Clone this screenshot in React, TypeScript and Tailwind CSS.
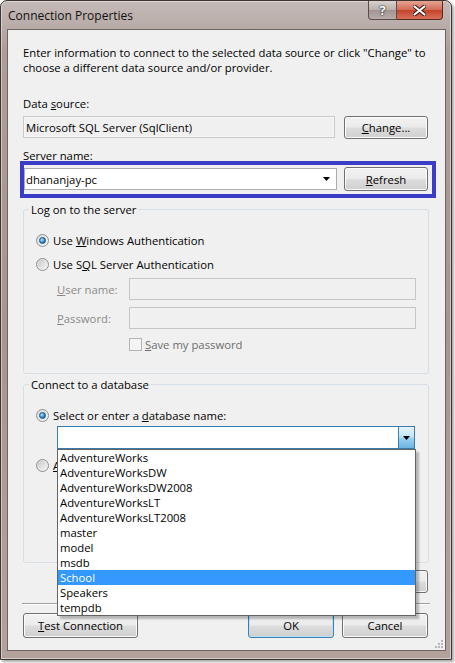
import React from "react";

const BTN =
  "flex items-center justify-center rounded-[3px] border bg-[linear-gradient(#f2f2f2_0%,#ebebeb_48%,#dddddd_52%,#cfcfcf_100%)] text-black";

function Button({
  children,
  className = "",
  primary = false,
}: {
  children: React.ReactNode;
  className?: string;
  primary?: boolean;
}) {
  return (
    <button
      type="button"
      className={`${BTN} ${
        primary
          ? "border-[#3c7fb1] shadow-[inset_0_0_0_1px_#b8e2f8]"
          : "border-[#707070] shadow-[inset_0_0_0_1px_#fbfbfb]"
      } ${className}`}
    >
      {children}
    </button>
  );
}

function Radio({ checked = false }: { checked?: boolean }) {
  return (
    <span className="flex h-[13px] w-[13px] shrink-0 items-center justify-center rounded-full border border-[#8e8f8f] bg-[linear-gradient(135deg,#d9d9d9,#f8f8f8)]">
      <span
        className={
          checked
            ? "h-[7px] w-[7px] rounded-full border border-[#1c5180] bg-[radial-gradient(circle_at_35%_35%,#b4ecff,#2a8bd8_55%,#0d4a91)]"
            : "h-[9px] w-[9px] rounded-full bg-[linear-gradient(135deg,#cbcbcb,#f4f4f4)]"
        }
      />
    </span>
  );
}

function Arrow() {
  return (
    <svg width="7" height="4" viewBox="0 0 7 4">
      <path d="M0 0h7L3.5 4z" fill="#000" />
    </svg>
  );
}

const DATABASES = [
  "AdventureWorks",
  "AdventureWorksDW",
  "AdventureWorksDW2008",
  "AdventureWorksLT",
  "AdventureWorksLT2008",
  "master",
  "model",
  "msdb",
  "School",
  "Speakers",
  "tempdb",
];

export default function App() {
  return (
    <div className="h-[663px] w-[455px] bg-white font-['Open_Sans','Noto_Sans',sans-serif] text-[11.3px] leading-[15px] text-black">
      <div className="relative h-[660px] w-[452px] rounded-t-[7px] border border-[#3e3432] bg-[linear-gradient(180deg,#c4bab7_0%,#ad9d98_8%,#a8958f_50%,#b3a29c_100%)] shadow-[2px_2px_3px_rgba(0,0,0,0.35),inset_0_0_0_1px_rgba(255,255,255,0.45)]">
        {/* title bar */}
        <div className="flex h-[28px] items-center">
          <span className="pl-[7px] pt-[1px] text-[12px] text-[#111]">Connection Properties</span>
          <div className="ml-auto mr-[8px] flex self-start">
            <div className="flex h-[19px] w-[29px] items-center justify-center rounded-bl-[4px] border border-t-0 border-[#5a4c49] bg-[linear-gradient(#d8d2d0_0%,#b9aeab_50%,#a29592_51%,#b7aca9_100%)] text-[13px] font-bold leading-none text-white [text-shadow:0_0_2px_#222,0_0_1px_#000]">
              ?
            </div>
            <div className="flex h-[19px] w-[46px] items-center justify-center rounded-br-[4px] border border-l-0 border-t-0 border-[#5a2a22] bg-[linear-gradient(#e6a493_0%,#d26a55_50%,#c4432b_51%,#d9705a_100%)]">
              <svg width="13" height="11" viewBox="0 0 13 11">
                <path
                  d="M1 1l11 9M12 1L1 10"
                  stroke="#3a1510"
                  strokeWidth="4"
                  strokeLinecap="round"
                />
                <path
                  d="M1.5 1.5l10 8M11.5 1.5l-10 8"
                  stroke="#fff"
                  strokeWidth="2.2"
                  strokeLinecap="round"
                />
              </svg>
            </div>
          </div>
        </div>

        {/* client area */}
        <div className="relative ml-[6px] h-[622px] w-[439px] border border-[#6f6462] bg-[#f0f0f0] pl-[15px] pr-[17px]">
          <p className="mt-[15px]">
            Enter information to connect to the selected data source or click "Change" to
            choose a different data source and/or provider.
          </p>

          <div className="mt-[21px]">
            Data <u>s</u>ource:
          </div>
          <div className="mt-[5px] flex h-[23px] items-start justify-between">
            <div className="flex h-[22px] w-[312px] items-center border border-[#c9c9c9] bg-[#f0f0f0] pl-[2px] shadow-[inset_0_0_0_1px_#f6f6f6]">
              Microsoft SQL Server (SqlClient)
            </div>
            <Button className="h-[23px] w-[84px]">
              <u>C</u>hange...
            </Button>
          </div>

          <div className="mt-[9px]">Server name:</div>
          <div className="relative mt-[4px] flex h-[24px] items-start justify-between">
            <div className="ml-[1px] mt-[1px] flex h-[22px] w-[313px] items-center border border-[#abadb3] bg-white pl-[1px] pr-[6px]">
              <span>dhananjay-pc</span>
              <span className="ml-auto">
                <Arrow />
              </span>
            </div>
            <Button className="h-[24px] w-[84px]">
              <u>R</u>efresh
            </Button>
            <div className="pointer-events-none absolute -left-[3px] -top-[6px] h-[37px] w-[416px] border-4 border-[#3b3dc7]" />
          </div>

          <fieldset className="mt-[11px] h-[172px] w-[406px] rounded-[3px] border border-[#d5dfe5]">
            <legend className="ml-[5px] px-[2px]">Log on to the server</legend>
            <div className="mt-[16px] flex h-[15px] items-center gap-[4px] pl-[12px]">
              <Radio checked />
              <span>
                Use <u>W</u>indows Authentication
              </span>
            </div>
            <div className="mt-[9px] flex h-[15px] items-center gap-[4px] pl-[12px]">
              <Radio />
              <span>
                Use S<u>Q</u>L Server Authentication
              </span>
            </div>
            <div className="mt-[6px] flex h-[22px] items-center pl-[33px]">
              <span className="w-[72px] text-[#8a8a8a]">
                <u>U</u>ser name:
              </span>
              <div className="h-[22px] w-[287px] border border-[#c6c6c6] bg-[#f0f0f0]" />
            </div>
            <div className="mt-[7px] flex h-[22px] items-center pl-[33px]">
              <span className="w-[72px] text-[#8a8a8a]">
                <u>P</u>assword:
              </span>
              <div className="h-[22px] w-[287px] border border-[#c6c6c6] bg-[#f0f0f0]" />
            </div>
            <div className="mt-[8px] flex h-[15px] items-center gap-[3px] pl-[105px] text-[#6d6d6d]">
              <span className="h-[13px] w-[13px] border border-[#b4b4b4] bg-[#f4f4f4]" />
              <span>
                <u>S</u>ave my password
              </span>
            </div>
          </fieldset>

          <fieldset className="mt-[3px] h-[186px] w-[406px] rounded-[3px] border border-[#d5dfe5]">
            <legend className="ml-[5px] px-[2px]">Connect to a database</legend>
            <div className="mt-[16px] flex h-[15px] items-center gap-[4px] pl-[12px]">
              <Radio checked />
              <span>
                Select or enter a <u>d</u>atabase name:
              </span>
            </div>
            <div className="relative ml-[33px] mt-[3px] h-[23px] w-[358px]">
              <div className="flex h-[23px] w-[358px] border border-[#3d7bad] bg-white">
                <div className="ml-auto flex w-[16px] items-center justify-center border-l border-[#3c7fb1] bg-[linear-gradient(#e5f4fc_0%,#c4e5f6_45%,#98d1ef_55%,#6cb4e4_100%)]">
                  <Arrow />
                </div>
              </div>
              <ul className="absolute left-0 top-[23px] z-10 w-[359px] border border-[#646464] bg-white shadow-[3px_3px_2px_rgba(0,0,0,0.25)]">
                {DATABASES.map((db) => (
                  <li
                    key={db}
                    className={`h-[15px] pl-[2px] ${
                      db === "School" ? "bg-[#3399ff] text-white" : ""
                    }`}
                  >
                    {db}
                  </li>
                ))}
              </ul>
            </div>
            <div className="mt-[9px] flex h-[15px] items-center gap-[4px] pl-[12px]">
              <Radio />
              <span>
                <u>A</u>ttach a database file:
              </span>
            </div>
          </fieldset>

          <div className="mt-[7px] flex justify-end">
            <Button className="h-[23px] w-[84px]">Ad<u>v</u>anced...</Button>
          </div>

          <div className="-ml-[1px] mt-[10px] h-[2px] w-[408px] border-t border-b border-t-[#a0a0a0] border-b-white" />

          <div className="mt-[8px] flex h-[25px]">
            <Button className="h-[25px] w-[115px]">
              <u>T</u>est Connection
            </Button>
            <Button primary className="ml-auto h-[25px] w-[86px]">
              OK
            </Button>
            <Button className="ml-[8px] h-[25px] w-[86px]">Cancel</Button>
          </div>

          <svg
            className="absolute bottom-[2px] right-[2px]"
            width="10"
            height="10"
            viewBox="0 0 10 10"
          >
            {[
              [8, 2],
              [8, 5],
              [5, 5],
              [8, 8],
              [5, 8],
              [2, 8],
            ].map(([x, y]) => (
              <rect key={`${x}-${y}`} x={x} y={y} width="2" height="2" fill="#b7b7b7" />
            ))}
          </svg>
        </div>
      </div>
    </div>
  );
}
